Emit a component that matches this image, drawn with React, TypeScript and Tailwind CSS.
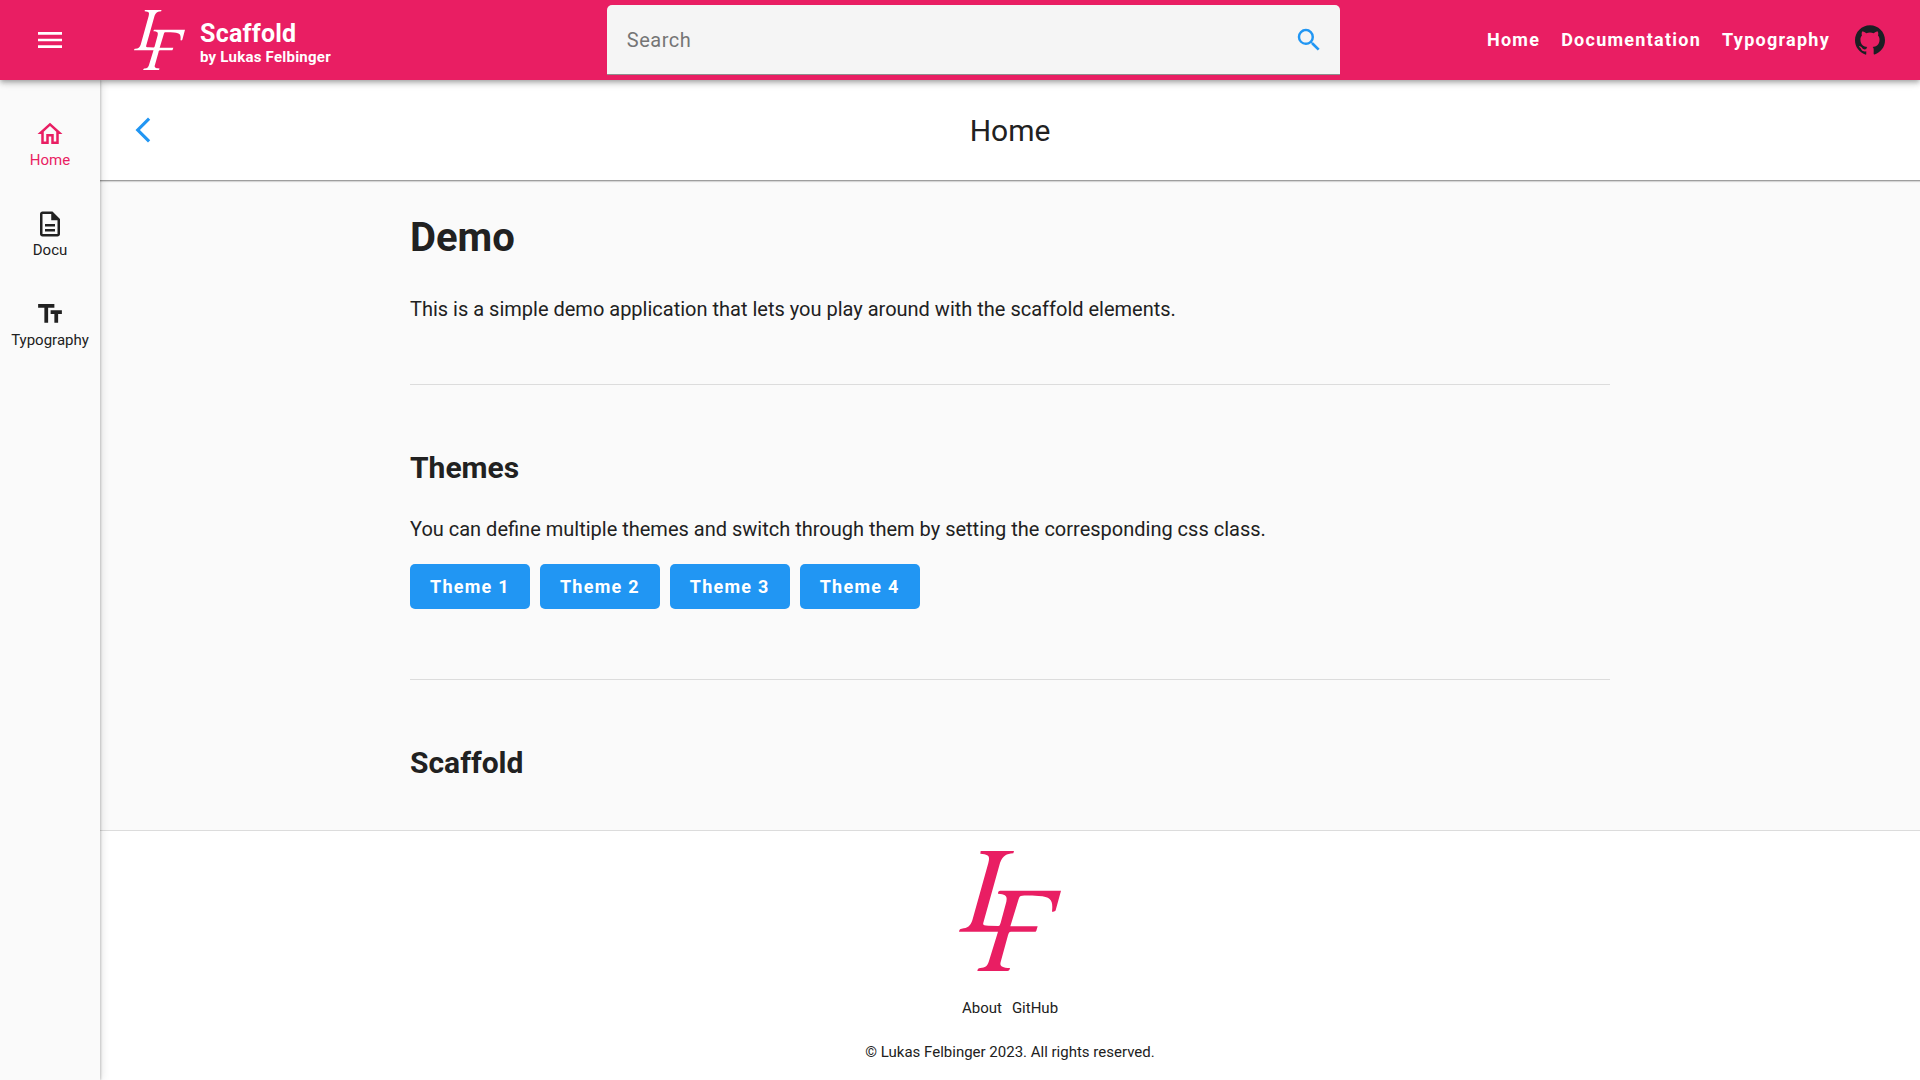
import React from "react";
import {
  MdArrowBackIosNew,
  MdMenu,
  MdOutlineDescription,
  MdOutlineHome,
  MdSearch,
  MdTextFields,
} from "react-icons/md";
import { SiGithub } from "react-icons/si";
import type { IconType } from "react-icons";

function Logo({ className }: { className: string }) {
  return (
    <svg viewBox="0 0 306 360" className={className} fill="currentColor" role="img" aria-label="Lukas Felbinger logo">
      <path d="M65 0H165L163 7C142 9 132 13 123 36L73 215C71 223 75 223 88 224L118 225C122 225 123 221 125 215L142 152C145 135 142 130 117 128C117 122 119 119 124 119H306L290 178C288 182 284 183 279 182C282 151 279 137 239 135C219 134 203 133 190 134C182 134 181 138 179 144L154 226H236L232 239C231 242 229 242 225 242H156C150 242 149 247 147 253L126 329C121 344 125 350 153 351C152 357 150 360 145 360H55C56 354 58 351 64 351C79 350 84 346 89 333L117 242H0C1 236 3 233 8 233C26 232 34 225 40 208L88 36C93 16 91 10 64 8Z" />
    </svg>
  );
}

type Entry = { label: string; icon: IconType; active?: boolean };

const sideItems: Entry[] = [
  { label: "Home", icon: MdOutlineHome, active: true },
  { label: "Docu", icon: MdOutlineDescription },
  { label: "Typography", icon: MdTextFields },
];

const themes = ["Theme 1", "Theme 2", "Theme 3", "Theme 4"];

function Header() {
  return (
    <header className="relative z-20 flex h-20 shrink-0 items-center bg-[#e91e63] text-white shadow-[0_2px_4px_-1px_rgba(0,0,0,0.2),0_4px_5px_0_rgba(0,0,0,0.14),0_1px_10px_0_rgba(0,0,0,0.12)]">
      <div className="flex flex-1 items-center pr-[62px]">
        <div className="flex w-[100px] justify-center">
          <button type="button" aria-label="Menu">
            <MdMenu className="size-8" />
          </button>
        </div>
        <a href="#home" className="ml-[34px] flex items-center gap-[15px]">
          <Logo className="h-[60px] w-[51px]" />
          <span className="flex flex-col pt-1.5 font-bold tracking-[0.015em]">
            <span className="text-[25px] leading-7">Scaffold</span>
            <span className="text-[15px] leading-[18px]">by Lukas Felbinger</span>
          </span>
        </a>
      </div>
      <form className="flex h-[70px] w-[38.2%] items-center rounded-t-[5px] border-b border-[#8e8e8e] bg-[#f5f5f5] px-5">
        <input
          type="text"
          aria-label="Search"
          placeholder="Search"
          className="min-w-0 flex-1 bg-transparent text-xl tracking-wide text-[#212121] outline-none placeholder:text-[#757575]"
        />
        <button type="button" aria-label="Search" className="-mr-1 text-[#2196f3]">
          <MdSearch className="size-[30px]" />
        </button>
      </form>
      <nav className="flex flex-1 items-center justify-end gap-[21px] pr-[35px] text-lg font-bold tracking-[0.07em]">
        <a href="#home">Home</a>
        <a href="#documentation">Documentation</a>
        <a href="#typography">Typography</a>
        <a href="#github" aria-label="GitHub" className="ml-1 text-[#1b1f23]">
          <SiGithub className="size-[30px]" />
        </a>
      </nav>
    </header>
  );
}

function Sidebar() {
  return (
    <nav className="relative z-10 flex w-[100px] shrink-0 flex-col bg-[#fafafa] pt-5 shadow-[1px_0_2px_rgba(0,0,0,0.18),2px_0_8px_rgba(0,0,0,0.1)]">
      {sideItems.map(({ label, icon: Icon, active }) => (
        <a
          key={label}
          href={"#" + label.toLowerCase()}
          className={
            "flex h-[90px] flex-col items-center justify-center text-[15px] leading-[22px] " +
            (active ? "text-[#e91e63]" : "text-[#212121]")
          }
        >
          <Icon className="size-[30px]" />
          <span>{label}</span>
        </a>
      ))}
    </nav>
  );
}

export default function App() {
  return (
    <div className="flex min-h-screen flex-col bg-[#fafafa] font-[Roboto,sans-serif] text-[#212121]">
      <Header />
      <div className="flex flex-1">
        <Sidebar />
        <div className="flex min-w-0 flex-1 flex-col">
          <div className="grid h-[101px] grid-cols-[1fr_auto_1fr] items-center border-b border-[#9e9e9e] bg-white px-7 shadow-[0_1px_1px_rgba(0,0,0,0.14)]">
            <button type="button" aria-label="Back" className="justify-self-start text-[#2196f3]">
              <MdArrowBackIosNew className="size-[30px]" />
            </button>
            <span className="pt-0.5 text-3xl">Home</span>
          </div>
          <main className="mx-auto w-full max-w-[1200px] flex-1">
            <h1 className="mt-8 text-[40px] leading-[50px] font-bold">Demo</h1>
            <p className="mt-[30px] text-xl leading-8">
              This is a simple demo application that lets you play around with the scaffold elements.
            </p>
            <hr className="my-[59px] border-[#dcdcdc]" />
            <h2 className="text-3xl leading-[48px] font-bold">Themes</h2>
            <p className="mt-[21px] text-xl leading-8">
              You can define multiple themes and switch through them by setting the corresponding css class.
            </p>
            <div className="mt-[19px] flex gap-2.5">
              {themes.map((theme) => (
                <button
                  key={theme}
                  type="button"
                  className="h-[45px] rounded-[5px] bg-[#2196f3] px-5 text-lg font-bold tracking-[0.07em] text-white"
                >
                  {theme}
                </button>
              ))}
            </div>
            <hr className="mt-[70px] mb-[59px] border-[#dcdcdc]" />
            <h2 className="text-3xl leading-[48px] font-bold">Scaffold</h2>
          </main>
          <footer className="flex h-[250px] flex-col items-center border-t border-[#dcdcdc] bg-white pt-5 text-[15px] leading-5">
            <Logo className="h-[120px] w-[102px] text-[#e91e63]" />
            <div className="mt-[27px] flex gap-2.5">
              <a href="#about">About</a>
              <a href="#github">GitHub</a>
            </div>
            <p className="mt-6">© Lukas Felbinger 2023. All rights reserved.</p>
          </footer>
        </div>
      </div>
    </div>
  );
}
